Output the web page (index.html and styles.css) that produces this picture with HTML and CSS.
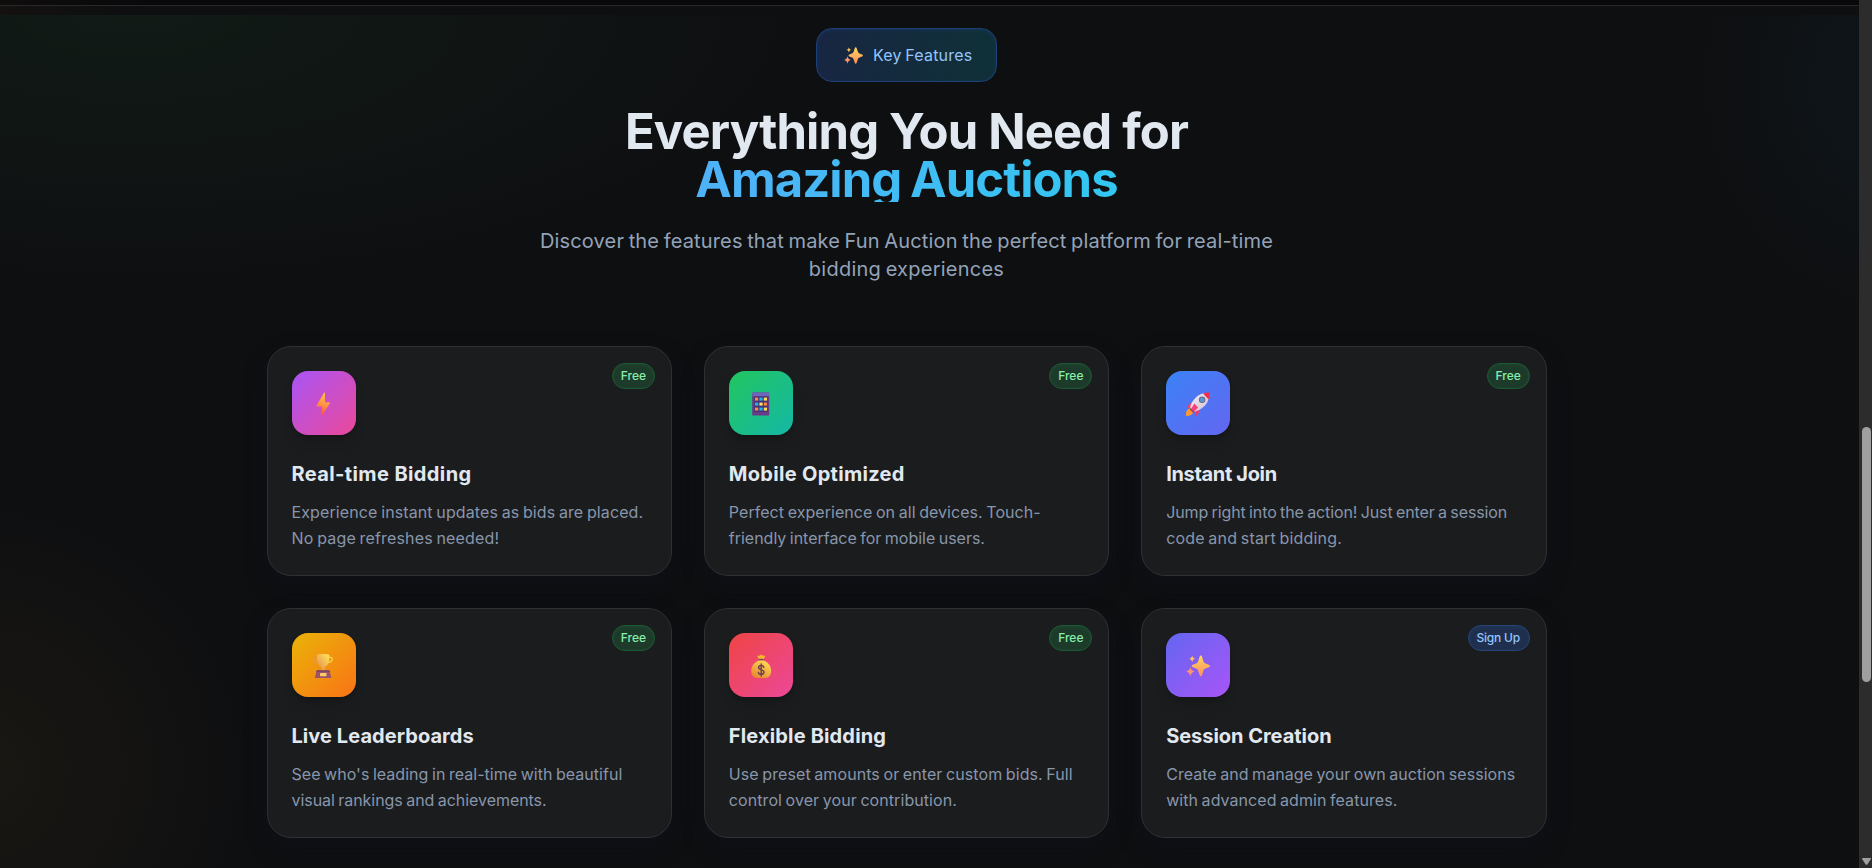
FILE: index.html
```html
<!DOCTYPE html>
<html lang="en">
<head>
<meta charset="utf-8">
<title>Fun Auction – Key Features</title>
<link rel="stylesheet" href="styles.css">
</head>
<body>
<svg class="defs" width="0" height="0" aria-hidden="true">
  <defs>
    <linearGradient id="goldDeep" gradientUnits="userSpaceOnUse" x1="0" y1="2" x2="0" y2="22"><stop offset="0" stop-color="#ffd65a"/><stop offset="1" stop-color="#ff8f5e"/></linearGradient>
    <linearGradient id="boltFill" x1="0.6" y1="0" x2="0.4" y2="1"><stop offset="0" stop-color="#ffc14a"/><stop offset=".5" stop-color="#ff9545"/><stop offset="1" stop-color="#f84f4a"/></linearGradient>
    <linearGradient id="cupFill" x1="0" y1="1" x2="1" y2="0"><stop offset="0" stop-color="#e58a4a"/><stop offset="1" stop-color="#ffe75c"/></linearGradient>
    <linearGradient id="bagFill" x1="0.8" y1="0" x2="0.2" y2="1"><stop offset="0" stop-color="#ffdc57"/><stop offset="1" stop-color="#e6862f"/></linearGradient>
    <linearGradient id="hullFill" x1="0" y1="0" x2="1" y2="1"><stop offset="0" stop-color="#f5eef5"/><stop offset="1" stop-color="#cfc0d2"/></linearGradient>
    <symbol id="sparkles" viewBox="0 0 24 24">
      <path fill="url(#goldDeep)" d="M14.8 1.5c.7 0 1 .5 1.200 1.200l1.500 4.700c.4 1.200 1 1.700 2.100 2.100l3.200 1.200c.7.300 1.100.700 1.100 1.300s-.4 1-1.100 1.300l-3.200 1.200c-1.100.4-1.700 1-2.100 2.100L16 21.300c-.2.700-.6 1.200-1.200 1.200s-1-.5-1.200-1.200l-1.500-4.700c-.4-1.100-1-1.700-2.100-2.100l-3.200-1.200c-.7-.3-1.100-.7-1.100-1.300s.4-1 1.100-1.300l3.200-1.200c1.100-.4 1.700-.9 2.100-2.100l1.500-4.700c.2-.7.600-1.200 1.200-1.200z"/>
      <path fill="#ffc25a" d="M6.200 1.500c.4 1.900 1 2.500 3 3.300-2 .8-2.600 1.500-3 3.400-.5-1.900-1.100-2.600-3.100-3.400 2-.8 2.600-1.400 3.100-3.300z"/>
      <path fill="#ff946a" d="M4.400 13c.6 2.600 1.500 3.600 4.200 4.600-2.700 1-3.600 2-4.200 4.700-.6-2.700-1.500-3.700-4.200-4.700 2.700-1 3.600-2 4.200-4.600z"/>
    </symbol>
  </defs>
</svg>
<div class="page">
  <main class="content">
    <div class="previous-section"></div>
    <div class="section-gap"></div>
    <section class="features">
      <header class="intro">
        <div class="eyebrow">
          <svg class="eyebrow-icon" viewBox="0 0 24 24"><use href="#sparkles"/></svg>
          <span class="eyebrow-text">Key Features</span>
        </div>
        <h2 class="headline">
          <span class="headline-top">Everything You Need for</span>
          <span class="headline-accent">Amazing Auctions</span>
        </h2>
        <p class="lead"><span class="lead-first">Discover the features that make Fun Auction the perfect platform for real-time</span><br><span class="lead-last">bidding experiences</span></p>
      </header>

      <div class="cards">
        <article class="card card-realtime">
          <span class="tag tag-free">Free</span>
          <div class="tile"><svg class="emoji" viewBox="0 0 24 24"><path fill="url(#boltFill)" d="M11.800.9c.3-.5 1.200-.3 1.200.3v9h4.300c.6 0 .9.600.6 1.100L10.300 23.500c-.4.500-1.200.2-1.100-.4l.8-8.500H5.200c-.6 0-.9-.6-.6-1.100z"/></svg></div>
          <h3 class="card-title">Real-time Bidding</h3>
          <p class="card-text"><span class="row-a">Experience instant updates as bids are placed.</span><br><span class="row-b">No page refreshes needed!</span></p>
        </article>

        <article class="card card-mobile">
          <span class="tag tag-free">Free</span>
          <div class="tile"><svg class="emoji" viewBox="0 0 24 24">
            <rect x="3.200" y="0.500" width="17" height="23" rx="1" fill="#6a3a86"/>
            <rect x="3.200" y="0.500" width="17" height="3.800" rx="1" fill="#6f67bb"/>
            <rect x="5.300" y="4.500" width="13.200" height="15.500" fill="#433273"/>
            <g fill="#ff8746"><rect x="6" y="5.600" width="3.200" height="3"/><rect x="14.800" y="10.600" width="3.200" height="3"/><rect x="6" y="15.600" width="3.200" height="3"/></g>
            <g fill="#24b0f5"><rect x="10.400" y="5.600" width="3.200" height="3"/><rect x="6" y="10.600" width="3.200" height="3"/><rect x="10.400" y="15.600" width="3.200" height="3"/></g>
            <g fill="#ffe259"><rect x="14.800" y="5.600" width="3.200" height="3"/><rect x="10.400" y="10.600" width="3.200" height="3"/><rect x="14.800" y="15.600" width="3.200" height="3"/></g>
          </svg></div>
          <h3 class="card-title">Mobile Optimized</h3>
          <p class="card-text"><span class="row-a">Perfect experience on all devices. Touch-</span><br><span class="row-b">friendly interface for mobile users.</span></p>
        </article>

        <article class="card card-join">
          <span class="tag tag-free">Free</span>
          <div class="tile"><svg class="emoji" viewBox="0 0 24 24">
            <path fill="#ff9b2e" d="M1.900 17.500c-1.500 1.300-2 3.300-1.900 5.600.1.400.3.600.7.600 2.300 0 4.300-.4 5.600-1.900l1.500-2.300-3.500-3.700z"/>
            <path fill="#f43e70" d="M8.500 11.300H5.200c-1.500.2-3.200 1.700-4 3.600-.3.700.1 1.100.8 1.100h3.400z"/>
            <path fill="#e63c70" d="M13 16v4c-.2 1.500-.9 2.900-2.400 3.800-.6.300-1-.1-1.100-.7l-.9-3.900z"/>
            <path fill="url(#hullFill)" d="M22.900 1.200c.6 5.400-1.200 9.600-5 13.400-2.800 2.800-5.700 4.300-9.300 5.100L4.100 15.200c.9-3.600 2.500-6.500 5.200-9.300C13.200 2.100 17.500.6 22.900 1.200z"/>
            <path fill="#ee2f52" d="M22.700.5c.5 0 .8.300.8.800.1 2.200-.2 4.300-.9 6.200L17 1.400C18.800.7 20.700.4 22.700.5z"/>
            <path fill="#f84179" d="M8.400 11.500l3.700 4.100-6.200 6.500c-.8.300-2.300.3-3.900.2 0 0 1.900-1.200 2.100-4z"/>
            <path fill="#ff9b2e" d="M1.900 18.300c-1.400 1.300-1.900 3-1.800 4.900.1.300.3.500.7.500 2 0 3.900-.3 5.200-1.700l.8-1.500-3.300-3.300z"/>
            <path stroke="#50435f" stroke-width="1" d="M3.600 16.400l4.300 4.100"/>
            <circle cx="16.100" cy="7.800" r="2.700" fill="#4a9ee0" stroke="#76698c" stroke-width="1.100"/>
          </svg></div>
          <h3 class="card-title">Instant Join</h3>
          <p class="card-text"><span class="row-a">Jump right into the action! Just enter a session</span><br><span class="row-b">code and start bidding.</span></p>
        </article>

        <article class="card card-leaders">
          <span class="tag tag-free">Free</span>
          <div class="tile"><svg class="emoji" viewBox="0 0 24 24">
            <path fill="none" stroke="#e5984c" stroke-width="1.300" d="M6 3.400H3.600C2 3.400 1.700 4.500 2 5.500c.5 1.900 2.400 3.100 4.900 3.100"/>
            <path fill="none" stroke="#ffd13e" stroke-width="1.300" d="M16 3.400h2.600c1.600 0 1.900 1.100 1.600 2.100-.5 1.900-2.400 3.100-4.900 3.100"/>
            <path fill="url(#cupFill)" d="M5 .7C5 .2 7.500 0 11.100 0s6.200.2 6.200.7v4.600c0 4.300-2.300 6.600-4.700 7.800L12.800 16H9.400l.2-2.900C7.200 11.900 5 9.600 5 5.300z"/>
            <path fill="#9a5568" d="M4.500 17c.1-.5.500-.8 1-.8h11.200c.5 0 .9.300 1 .8l1.600 7H2.800z"/>
            <path fill="#7e4566" d="M4.500 17c.1-.5.500-.8 1-.8h11.200c.5 0 .9.300 1 .8l.2 1H4.300z"/>
            <rect x="8" y="19" width="6.500" height="3.200" rx=".4" fill="#ffc968"/>
          </svg></div>
          <h3 class="card-title">Live Leaderboards</h3>
          <p class="card-text"><span class="row-a">See who's leading in real-time with beautiful</span><br><span class="row-b">visual rankings and achievements.</span></p>
        </article>

        <article class="card card-flexible">
          <span class="tag tag-free">Free</span>
          <div class="tile"><svg class="emoji" viewBox="0 0 24 24">
            <path fill="#f8b62d" d="M8.500 2.500c-.3-.8.500-1.300 1.300-.9l.9.400c.5-1.600 2.600-1.600 3.100 0l1-.4c.8-.3 1.600.3 1.200 1L14.500 5.500H10z"/>
            <rect x="9.600" y="4.800" width="5.300" height="1.800" rx=".7" fill="#7d5358"/>
            <path fill="url(#bagFill)" d="M10.200 6.500h4.200c4.400 1.200 7.800 5.300 7.800 10.300 0 4.400-2.400 7.200-5.700 7.200H8c-3.400 0-5.800-2.800-5.800-7.200 0-5 3.500-9.100 8-10.300z"/>
            <path fill="none" stroke="#6f4650" stroke-width="1.500" stroke-linecap="round" d="M12.200 9.900v12M14.800 13.200c-.3-1.200-1.300-1.700-2.600-1.700-1.500 0-2.600.8-2.600 2.100 0 2.900 5.400 1.600 5.400 4.500 0 1.400-1.200 2.200-2.800 2.200-1.500 0-2.600-.7-2.800-2"/>
          </svg></div>
          <h3 class="card-title">Flexible Bidding</h3>
          <p class="card-text"><span class="row-a">Use preset amounts or enter custom bids. Full</span><br><span class="row-b">control over your contribution.</span></p>
        </article>

        <article class="card card-session">
          <span class="tag tag-signup">Sign Up</span>
          <div class="tile"><svg class="emoji" viewBox="0 0 24 24"><use href="#sparkles"/></svg></div>
          <h3 class="card-title">Session Creation</h3>
          <p class="card-text"><span class="row-a">Create and manage your own auction sessions</span><br><span class="row-b">with advanced admin features.</span></p>
        </article>
      </div>
    </section>
  </main>
  <aside class="scrollbar">
    <div class="scroll-thumb"></div>
    <svg class="scroll-arrow" viewBox="0 0 9 7"><path d="M.6 0h7.800c.5 0 .7.500.5.900L5.500 6.200c-.5.800-1.500.8-2 0L.1.900C-.1.500.100 0 .600 0z" fill="#a0a0a0"/></svg>
  </aside>
</div>
</body>
</html>
```
FILE: styles.css
```css
* { box-sizing: border-box; margin: 0; }
body {
  height: 868px;
  overflow: hidden;
  background: #0e0f11;
  color: #e2e8f0;
  font-family: Inter, "Liberation Sans", sans-serif;
}
.defs { position: absolute; }

.page { display: grid; grid-template-columns: 1fr 13px; height: 868px; }
.content { display: flex; flex-direction: column; min-width: 0; overflow: hidden; }
.previous-section {
  flex: none;
  height: 6px;
  background: linear-gradient(90deg, #0f0d0c, #09090b 150px);
  border-bottom: 1px solid #262829;
}
.section-gap { flex: none; height: 9px; background: linear-gradient(90deg, #141110, #0e0f11 140px); }

.features {
  flex: 1;
  padding: 13px 46px 0 0;
  background:
    radial-gradient(ellipse 680px 275px at 130px -5px, rgba(60, 190, 90, .068), rgba(60, 180, 90, .038) 45%, transparent),
    radial-gradient(ellipse 200px 240px at 1890px 65px, rgba(14, 150, 210, .05), transparent),
    radial-gradient(circle 275px at -20px 755px, rgba(225, 160, 50, .06), transparent),
    #0e0f11;
}

.intro { display: flex; flex-direction: column; align-items: center; text-align: center; }
.eyebrow {
  display: flex;
  align-items: center;
  gap: 10px;
  width: 181px;
  height: 54px;
  padding-left: 27px;
  border: 1px solid #1d4078;
  border-radius: 16px;
  background: linear-gradient(90deg, #182642, #0f3037);
  box-shadow: inset 0 1px 4px rgba(30, 64, 130, .4);
  color: #93c5fd;
  font-size: 16px;
  line-height: 24px;
}
.eyebrow-icon { width: 19px; height: 19px; margin-top: 1px; }
.eyebrow-text { letter-spacing: .18px; word-spacing: -1px; white-space: nowrap; }

.headline { width: 896px; margin-top: 26px; font-size: 49px; font-weight: 700; line-height: 48px; }
.headline-top, .headline-accent { display: block; }
.headline-top { letter-spacing: -.853px; }
.headline-accent {
  height: 46px;
  letter-spacing: -.93px;
  word-spacing: -2px;
  color: transparent;
  background: linear-gradient(90deg, #60a5fa, #22d3ee);
  -webkit-background-clip: text;
  background-clip: text;
}
.lead { margin-top: 25px; color: #94a3b8; font-size: 20px; line-height: 28px; word-spacing: -1.25px; white-space: nowrap; }
.lead-first { letter-spacing: .157px; }
.lead-last { letter-spacing: .241px; }

.cards {
  display: grid;
  grid-template-columns: repeat(3, 1fr);
  grid-auto-rows: 230px;
  gap: 32px;
  width: 1280px;
  margin: 63px auto 0;
}
.card {
  position: relative;
  padding: 24px;
  border: 1px solid #2e3032;
  border-radius: 24px;
  background: #1b1c1e;
  box-shadow: 0 10px 22px rgba(14, 18, 32, .45);
}
.tag {
  position: absolute;
  top: 16px;
  right: 16px;
  height: 26px;
  padding: 0 8px;
  border: 1px solid;
  border-radius: 13px;
  font-size: 12px;
  font-weight: 500;
  line-height: 24px;
}
.tag-free { width: 43px; border-color: #1c5a33; background: #1d3a2a; color: #86efac; box-shadow: inset 0 1px 4px rgba(34, 120, 65, .2); }
.tag-signup { width: 62px; border-color: #254478; background: #1f2f4d; color: #93c5fd; letter-spacing: -.202px; box-shadow: inset 0 1px 4px rgba(40, 80, 150, .2); }

.tile {
  display: flex;
  align-items: center;
  justify-content: center;
  width: 64px;
  height: 64px;
  border-radius: 16px;
  box-shadow: 0 8px 12px -2px rgba(0, 0, 0, .15), 0 3px 5px -2px rgba(0, 0, 0, .2);
}
.emoji { width: 24px; height: 24px; margin-top: 2px; }
.card-realtime .tile { background: linear-gradient(135deg, #a855f7, #ec4899); }
.card-mobile .tile { background: linear-gradient(135deg, #22c55e, #14b8a6); }
.card-join .tile { background: linear-gradient(135deg, #3b82f6, #6366f1); }
.card-leaders .tile { background: linear-gradient(135deg, #eab308, #f97316); }
.card-flexible .tile { background: linear-gradient(135deg, #ef4444, #ec4899); }
.card-session .tile { background: linear-gradient(135deg, #6366f1, #a855f7); }

.card-title { margin-top: 25px; font-size: 20px; font-weight: 700; line-height: 28px; white-space: nowrap; }
.card-text { margin-top: 11px; color: #8896ab; font-size: 16px; line-height: 26px; word-spacing: -1px; white-space: nowrap; }

/* per-line tracking */
.card-realtime .card-title { letter-spacing: .389px; }
.card-realtime .row-a { letter-spacing: .115px; }
.card-realtime .row-b { letter-spacing: .165px; }
.card-mobile .card-title { letter-spacing: .307px; }
.card-mobile .row-a { letter-spacing: .054px; }
.card-mobile .row-b { letter-spacing: -.014px; }
.card-join .card-title { letter-spacing: -.335px; }
.card-join .row-a { letter-spacing: -.104px; }
.card-join .row-b { letter-spacing: .17px; }
.card-leaders .card-title { letter-spacing: .065px; }
.card-leaders .row-a { letter-spacing: .034px; }
.card-leaders .row-b { letter-spacing: -.047px; }
.card-flexible .card-title { letter-spacing: .159px; }
.card-flexible .row-a { letter-spacing: .081px; }
.card-flexible .row-b { letter-spacing: .074px; }
.card-session .card-title { letter-spacing: -.031px; }
.card-session .row-a { letter-spacing: .034px; }
.card-session .row-b { letter-spacing: .056px; }

.scrollbar {
  display: flex;
  flex-direction: column;
  justify-content: space-between;
  padding: 427px 0 3px 3px;
  background: #2c2c2c;
}
.scroll-thumb { width: 9px; height: 255px; border-radius: 5px; background: #9f9f9f; }
.scroll-arrow { width: 9px; height: 7px; }
```
